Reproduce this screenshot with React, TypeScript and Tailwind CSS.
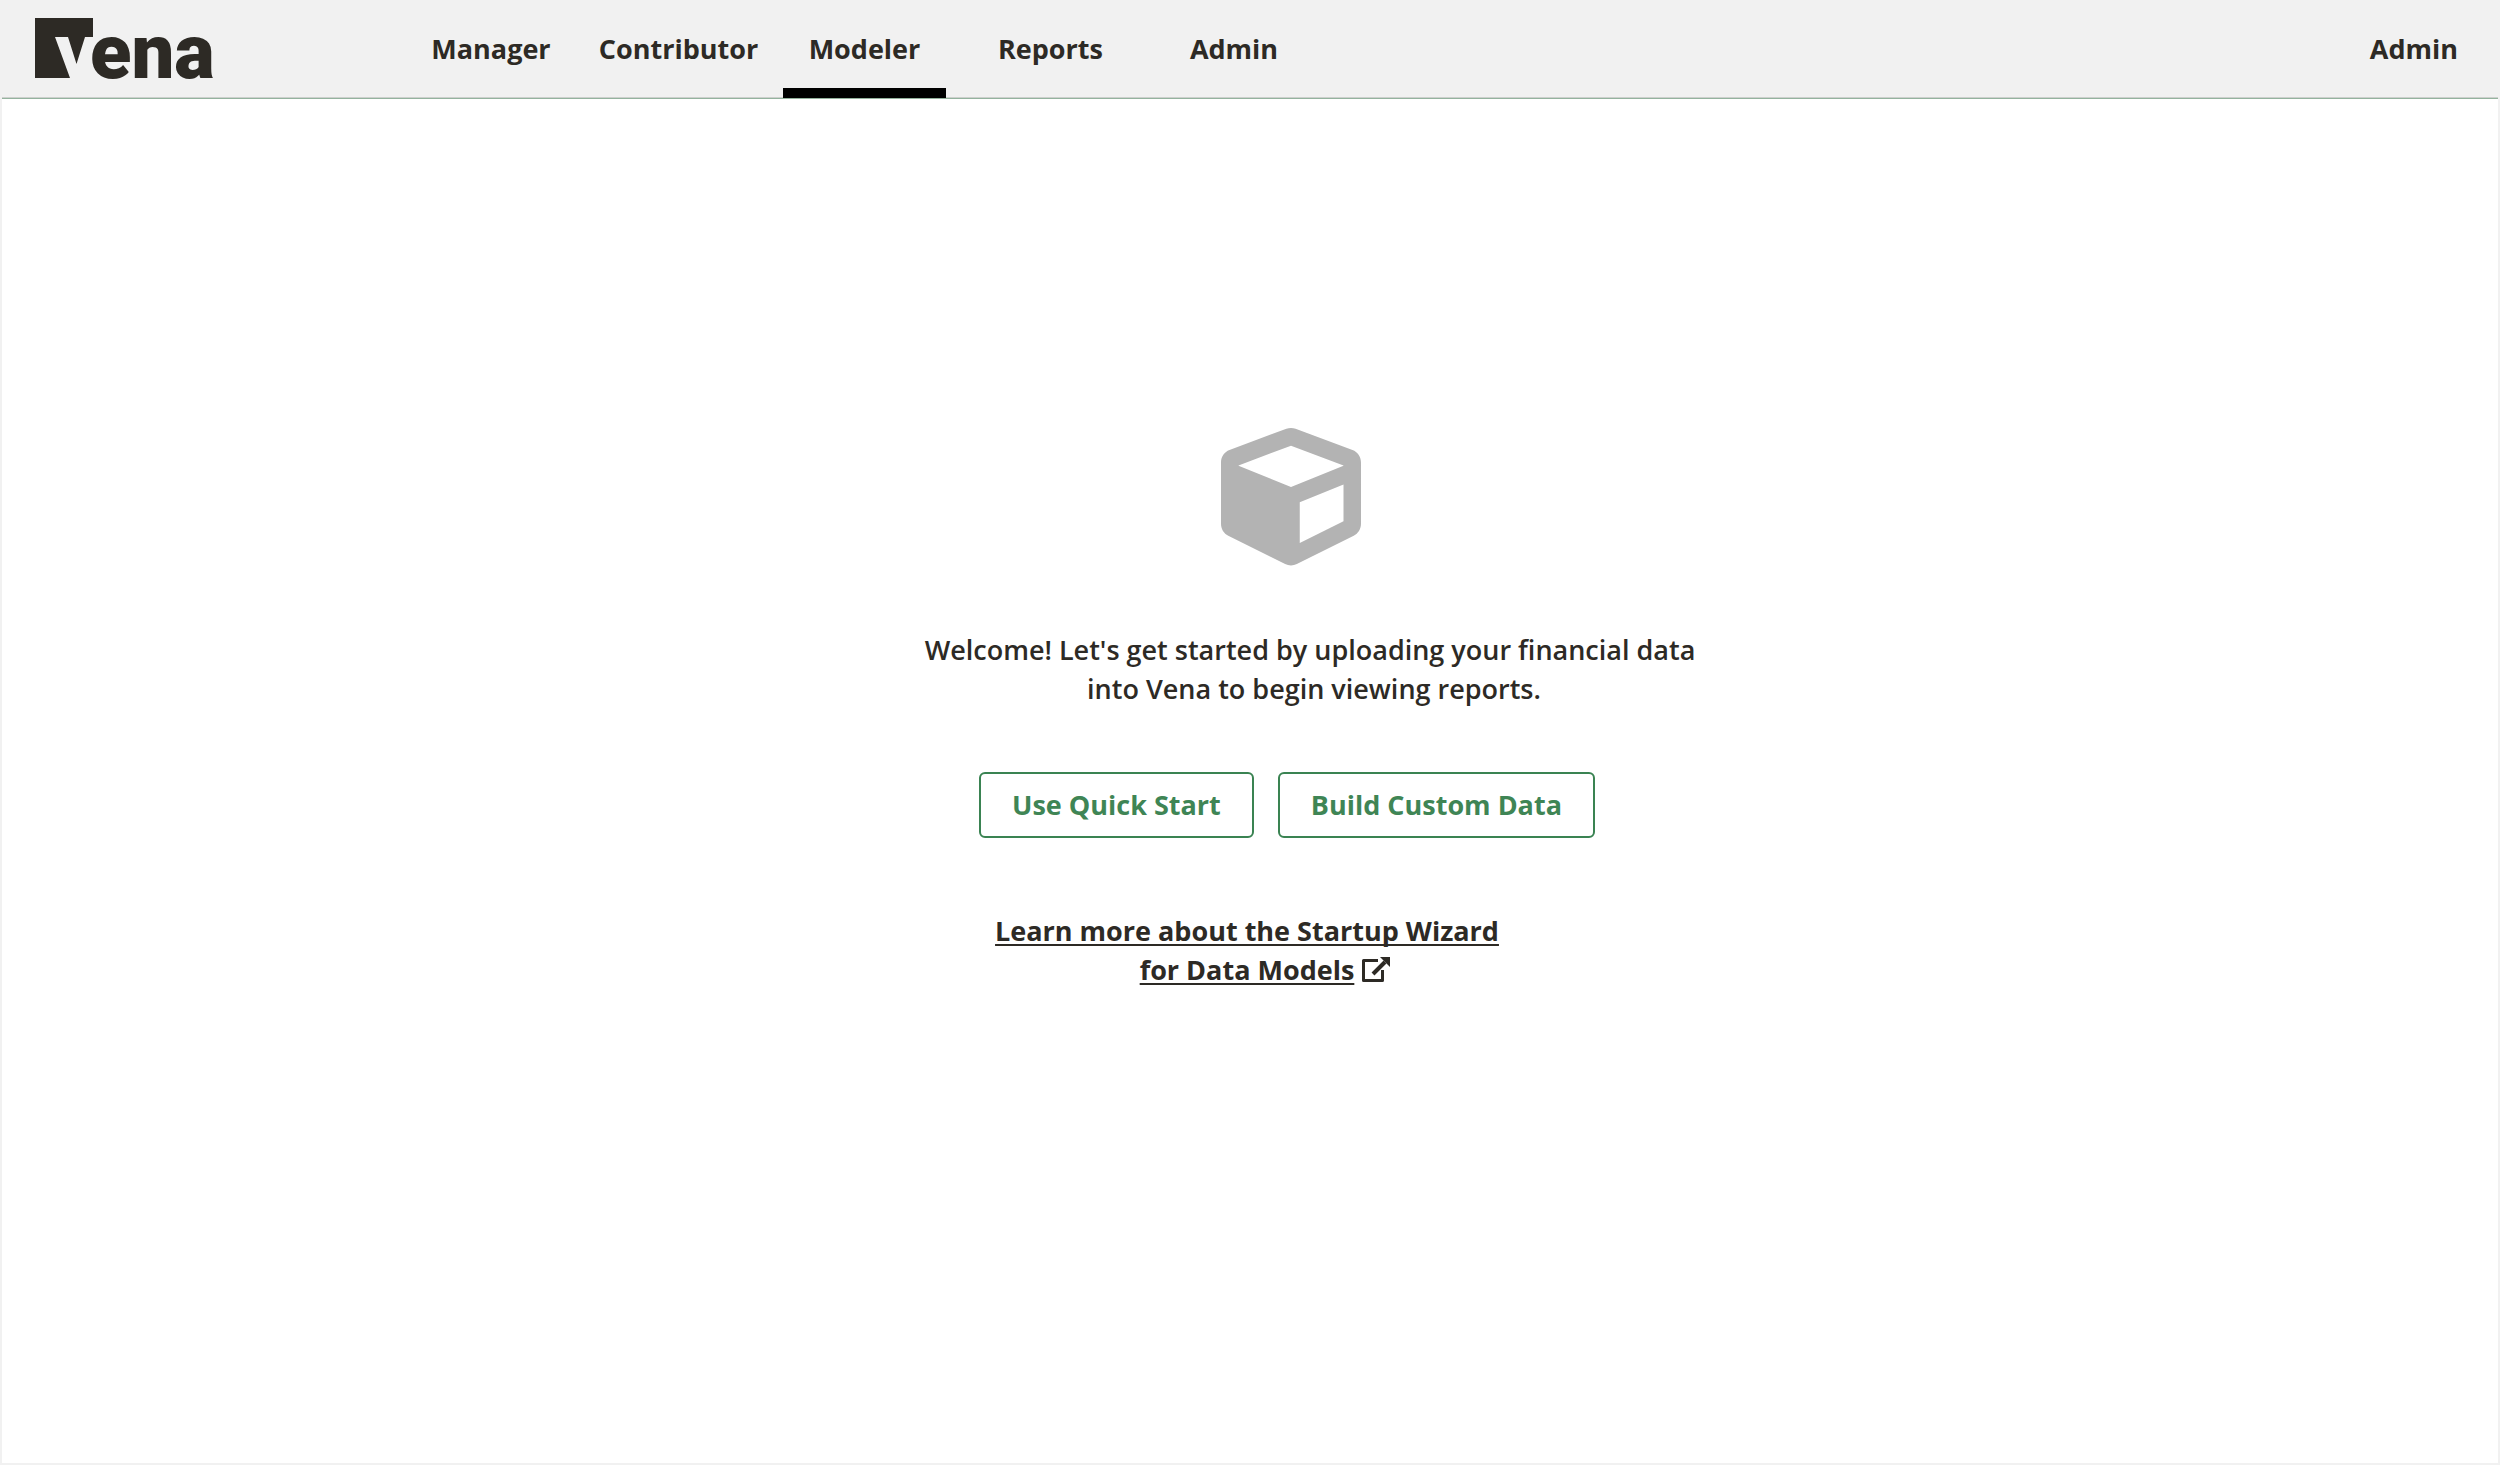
import { FaCube } from 'react-icons/fa';

const NAV_LINKS = [
  { href: '#manager', label: 'Manager' },
  { href: '#contributor', label: 'Contributor' },
  { href: '#modeler', label: 'Modeler' },
  { href: '#reports', label: 'Reports' },
  { href: '#admin', label: 'Admin' },
];

const ACTIONS = ['Use Quick Start', 'Build Custom Data'];

function Logo() {
  return (
    <svg width="190" height="97" viewBox="0 -18 190 97" fill="#2d2a25" role="img" aria-label="Vena">
      <path d="M0 0H58V19H50L41.500 46L33 19H20L35 60H0Z" />
      <text x="55" y="60" fontFamily="Roboto, sans-serif" fontWeight="900" fontSize="76">
        ena
      </text>
    </svg>
  );
}

function ExternalLinkIcon() {
  return (
    <svg width="28" height="28" viewBox="0 0 28 28" fill="none" stroke="#2d2a25" className="shrink-0">
      <path d="M16 4.500H1.500V24.500H20.500V14" strokeWidth="3" strokeLinejoin="round" />
      <path d="M11 18L23 6" strokeWidth="4" />
      <path d="M18 1H28V11Z" fill="#2d2a25" stroke="none" />
    </svg>
  );
}

function Header() {
  return (
    <header className="mx-0.5 flex h-[99px] items-stretch border-b border-[#94b39e] font-bold shadow-[inset_0_-1px_0_#cdd0cd]">
      <a href="#home" className="flex w-[406px] shrink-0 items-start pl-[33px]">
        <Logo />
      </a>
      <nav className="grid grid-cols-[166px_209px_163px_209px_158px]">
        {NAV_LINKS.map(({ href, label }) => (
          <a
            key={href}
            href={href}
            className={`flex items-center justify-center pt-2 ${
              label === 'Modeler' ? 'border-b-10 border-black' : 'pb-2.5'
            }`}
          >
            {label}
          </a>
        ))}
      </nav>
      <button type="button" className="ml-auto px-10 pb-0.5 font-bold">
        Admin
      </button>
    </header>
  );
}

export default function App() {
  return (
    <div
      style={{ fontFamily: '"Open Sans", sans-serif' }}
      className="flex min-h-screen flex-col bg-[#f1f1f1] text-[27px] leading-[39px] text-[#2d2a25]"
    >
      <Header />
      <main className="mx-0.5 mb-0.5 flex flex-1 flex-col items-center bg-white pt-[328px]">
        <div className="pl-[82px]">
          <FaCube size={140} color="#b3b3b3" />
        </div>

        <p className="mt-[63px] pl-[120px] text-center font-semibold">
          Welcome! Let's get started by uploading your financial data
          <br />
          <span className="pl-2">into Vena to begin viewing reports.</span>
        </p>

        <div className="mt-16 flex gap-6 pl-[74px]">
          {ACTIONS.map((label) => (
            <button
              key={label}
              type="button"
              className="h-[66px] rounded-md border-2 border-[#3a8352] px-[31px] pb-0.5 font-bold text-[#3f8555]"
            >
              {label}
            </button>
          ))}
        </div>

        <a href="#startup-wizard" className="mt-[73px] flex flex-col items-center pr-1.5 font-bold">
          <span className="underline decoration-2 underline-offset-3 [text-decoration-skip-ink:none]">
            Learn more about the Startup Wizard
          </span>
          <span className="flex items-center gap-2 pl-9">
            <span className="underline decoration-2 underline-offset-3 [text-decoration-skip-ink:none]">
              for Data Models
            </span>
            <ExternalLinkIcon />
          </span>
        </a>
      </main>
    </div>
  );
}
